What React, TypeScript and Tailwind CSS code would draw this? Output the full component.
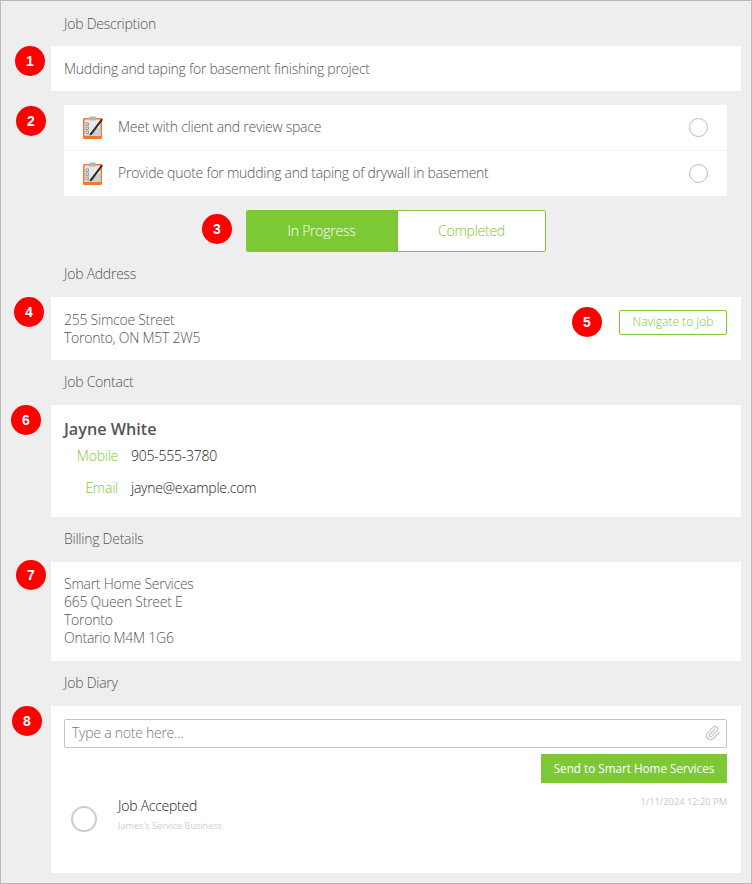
const font = { fontFamily: '"Open Sans", "Liberation Sans", sans-serif' };

function Badge({ n, className }: { n: number; className: string }) {
  return (
    <div
      className={`absolute flex h-[30px] w-[30px] items-center justify-center rounded-full bg-[#fe0000] text-[14px] font-bold text-white ${className}`}
      style={{ fontFamily: '"Liberation Sans", Arial, sans-serif' }}
    >
      {n}
    </div>
  );
}

function Label({ children, className = "" }: { children: string; className?: string }) {
  return <div className={`pl-[64px] text-[14px] leading-[20px] font-light tracking-[-0.25px] text-[#555] ${className}`}>{children}</div>;
}

function ClipboardIcon() {
  return (
    <svg width="22" height="25" viewBox="0 0 22 25" className="shrink-0">
      <rect x="1" y="3" width="19" height="21" rx="1.5" fill="#f2762e" />
      <rect x="2.5" y="4.5" width="16" height="16.5" fill="#e9e9e9" />
      <path d="M2.5 21 L18.500 21 L18.500 12 Z" fill="#cfcfcf" />
      <rect x="7" y="1.500" width="7" height="4" rx="1" fill="#b5b5b5" />
      <rect x="4" y="8" width="2.500" height="2.500" fill="none" stroke="#7d8b99" strokeWidth="0.8" />
      <rect x="4" y="12" width="2.500" height="2.500" fill="none" stroke="#7d8b99" strokeWidth="0.8" />
      <rect x="4" y="16" width="2.500" height="2.500" fill="none" stroke="#8a8a8a" strokeWidth="0.8" />
      <path d="M8 18.500 L19.500 3.500 L21 4.800 L10 19.500 L7.500 20.500 Z" fill="#2b2b2b" />
    </svg>
  );
}

function Radio({ className = "" }: { className?: string }) {
  return <div className={`h-[19px] w-[19px] rounded-full border border-[#bdbdbd] bg-white ${className}`} />;
}

function Task({ text, border }: { text: string; border?: boolean }) {
  return (
    <div className={`flex h-[45px] items-center pr-[19px] pl-[18px] ${border ? "h-[46px] border-t border-[#eeeeee]" : ""}`}>
      <ClipboardIcon />
      <span className="ml-[14px] flex-1 -translate-y-px text-[14px] font-light tracking-[-0.25px] text-[#555]">{text}</span>
      <Radio />
    </div>
  );
}

export default function App() {
  return (
    <div className="relative h-[884px] w-[752px] border border-[#b9b9b9] bg-[#eeeeee]" style={font}>
      <Badge n={1} className="top-[45px] left-[14px]" />
      <Badge n={2} className="top-[105px] left-[15px]" />
      <Badge n={3} className="top-[213px] left-[201px]" />
      <Badge n={4} className="top-[296px] left-[13px]" />
      <Badge n={5} className="top-[306px] left-[571px]" />
      <Badge n={6} className="top-[404px] left-[10px]" />
      <Badge n={7} className="top-[559px] left-[15px]" />
      <Badge n={8} className="top-[705px] left-[11px]" />

      <Label className="pt-[13px] pb-[12px] -ml-px">Job Description</Label>
      <div className="ml-[50px] flex h-[45px] w-[690px] items-center bg-white pl-[13px] text-[14px] font-light tracking-[-0.25px] text-[#555]">
        Mudding and taping for basement finishing project
      </div>

      <div className="mt-[14px] ml-[63px] w-[663px] bg-white">
        <Task text="Meet with client and review space" />
        <Task text="Provide quote for mudding and taping of drywall in basement" border />
      </div>

      <div className="mt-[14px] ml-[245px] flex h-[42px] w-[300px] overflow-hidden rounded-[2px] border border-[#7dc935] text-[14px] font-light tracking-[-0.25px]">
        <div className="flex w-[151px] items-center justify-center bg-[#7dc935] pr-[2px] pb-[2px] text-white">In Progress</div>
        <div className="flex flex-1 items-center justify-center bg-white pb-[2px] text-[#7dc935]">Completed</div>
      </div>

      <Label className="pt-[12px] pb-[13px] -ml-px">Job Address</Label>
      <div className="ml-[50px] flex h-[63px] w-[690px] items-center justify-between bg-white pr-[14px] pl-[13px] text-[14px] leading-[18px] font-light tracking-[-0.25px] text-[#555]">
        <div>
          <div>255 Simcoe Street</div>
          <div>Toronto, ON M5T 2W5</div>
        </div>
        <div className="-mt-[13px] flex h-[25px] w-[108px] items-center justify-center rounded-[2px] border border-[#7dc935] pb-px text-[12px] font-light tracking-normal text-[#7dc935]">
          Navigate to Job
        </div>
      </div>

      <Label className="pt-[12px] pb-[13px] -ml-px">Job Contact</Label>
      <div className="ml-[50px] h-[112px] w-[690px] bg-white pt-[13px] pl-[13px] text-[14px] font-light tracking-[-0.25px]">
        <div className="text-[16.2px] leading-[22px] font-semibold tracking-normal text-[#555]">Jayne White</div>
        <div className="mt-[4px] flex h-[22px] items-center">
          <span className="w-[54px] text-right text-[#7dc935]">Mobile</span>
          <span className="ml-[13px] text-[#222]">905-555-3780</span>
        </div>
        <div className="mt-[10px] flex h-[22px] items-center">
          <span className="w-[54px] text-right text-[#7dc935]">Email</span>
          <span className="ml-[13px] text-[#222]">jayne@example.com</span>
        </div>
      </div>

      <Label className="pt-[12px] pb-[13px] -ml-px">Billing Details</Label>
      <div className="ml-[50px] h-[99px] w-[690px] bg-white pt-[13px] pl-[13px] text-[14px] leading-[18px] font-light tracking-[-0.25px] text-[#555]">
        <div>Smart Home Services</div>
        <div>665 Queen Street E</div>
        <div>Toronto</div>
        <div>Ontario M4M 1G6</div>
      </div>

      <Label className="pt-[12px] pb-[13px] -ml-px">Job Diary</Label>
      <div className="ml-[50px] h-[167px] w-[690px] bg-white pt-[13px] pr-[14px] pl-[13px]">
        <div className="flex h-[29px] items-center justify-between rounded-[2px] border border-[#c4c4c4] pr-[5px] pb-[2px] pl-[7px] text-[14px] font-light tracking-[-0.25px] text-[#777]">
          <span>Type a note here...</span>
          <svg width="16" height="18" viewBox="0 0 24 24" fill="none" stroke="#c4c4c4" strokeWidth="1.800" strokeLinecap="round" strokeLinejoin="round">
            <path d="m21.440 11.050-9.190 9.190a6 6 0 0 1-8.490-8.490l8.570-8.570A4 4 0 1 1 18 8.840l-8.590 8.570a2 2 0 0 1-2.830-2.830l8.490-8.480" />
          </svg>
        </div>
        <div className="mt-[6px] flex justify-end">
          <div className="flex h-[29px] w-[186px] items-center justify-center bg-[#7dc935] text-[11.7px] font-normal text-white">
            Send to Smart Home Services
          </div>
        </div>
        <div className="mt-[13px] flex">
          <div className="mt-[10px] ml-[7px] h-[26px] w-[26px] rounded-full border-2 border-[#cccccc]" />
          <div className="ml-[21px] flex-1">
            <div className="text-[14px] leading-[20px] font-light tracking-[-0.25px] text-[#222]">Job Accepted</div>
            <div className="mt-[4px] text-[9.1px] leading-[12px] text-[#cfcfcf]">James's Service Business</div>
          </div>
          <div className="text-[9.3px] leading-[12px] text-[#c8c8c8]">1/11/2024 12:20 PM</div>
        </div>
      </div>
    </div>
  );
}
